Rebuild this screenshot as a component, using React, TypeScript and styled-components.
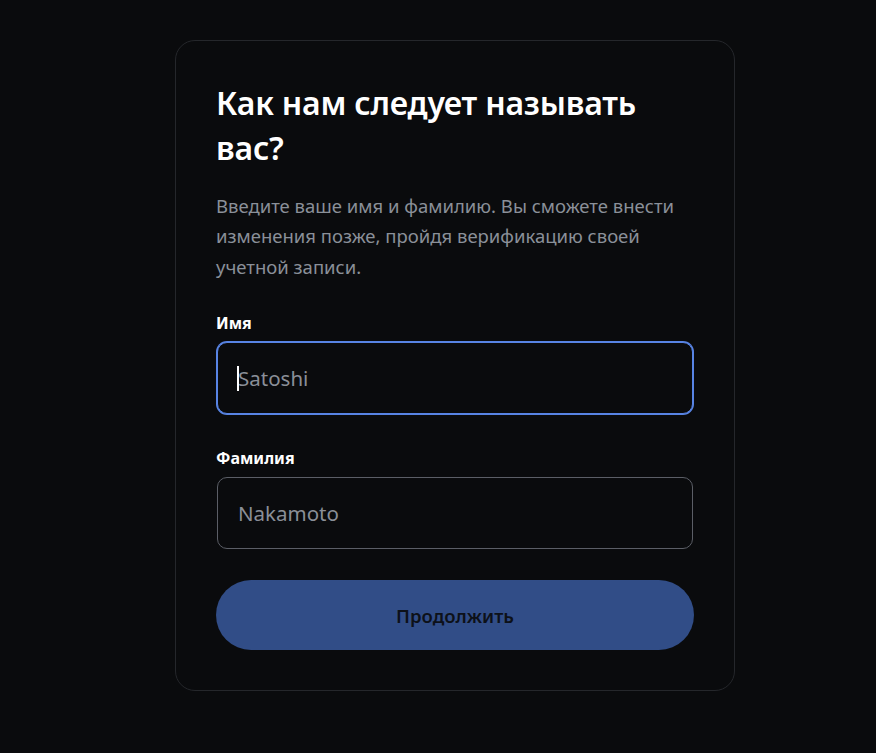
import React from "react";
import styled, { createGlobalStyle } from "styled-components";

const Global = createGlobalStyle`
  html, body { margin: 0; padding: 0; background: #0a0b0d; }
  body { font-family: "Noto Sans", "Open Sans", sans-serif; color: #fff; }
  * { box-sizing: border-box; }
`;

const Page = styled.div`
  min-height: 753px;
  padding: 40px 0 0 175px;
`;

const Card = styled.div`
  width: 560px;
  padding: 40px;
  border: 1px solid #25272b;
  border-radius: 20px;
  background: #0a0b0d;
  display: flex;
  flex-direction: column;
`;

const Title = styled.h1`
  margin: 0;
  font-size: 32px;
  line-height: 1.4;
  font-weight: 600;
  color: #ffffff;
  letter-spacing: -0.2px;
`;

const Lead = styled.p`
  margin: 20px 0 0;
  font-size: 18.5px;
  line-height: 30.6px;
  color: #8a9099;
`;

const Field = styled.div<{ $top: number }>`
  display: flex;
  flex-direction: column;
  margin-top: ${(p) => p.$top}px;
`;

const Label = styled.label`
  font-size: 16px;
  line-height: 20px;
  font-weight: 700;
  color: #ffffff;
  margin-bottom: 9px;
`;

const InputWrap = styled.div`
  position: relative;
  padding: 0 1px;
`;

const Input = styled.input<{ $focused?: boolean }>`
  display: block;
  width: 100%;
  height: 72px;
  padding: 0 20px;
  border-radius: 10px;
  border: 1px solid ${(p) => (p.$focused ? "#5884e4" : "#5b5e66")};
  box-shadow: ${(p) => (p.$focused ? "0 0 0 1px #5884e4" : "none")};
  background: #0a0b0d;
  color: #ffffff;
  font-family: "Noto Sans", sans-serif;
  font-size: 20.5px;
  outline: none;
  caret-color: transparent;
  &::placeholder { color: #8a8f98; }
`;

const Caret = styled.span`
  position: absolute;
  left: 21px;
  top: 24px;
  width: 2px;
  height: 25px;
  background: #ffffff;
`;

const Button = styled.button`
  margin-top: 31px;
  height: 70px;
  width: 100%;
  border: none;
  border-radius: 35px;
  background: #314d87;
  color: #0d1119;
  font-family: "Noto Sans", sans-serif;
  font-size: 18.5px;
  font-weight: 600;
  cursor: pointer;
`;

export default function App() {
  return (
    <>
      <Global />
      <Page>
        <Card>
          <Title>Как нам следует называть вас?</Title>
          <Lead>
            Введите ваше имя и фамилию. Вы сможете внести изменения позже, пройдя верификацию своей учетной записи.
          </Lead>
          <Field $top={31}>
            <Label>Имя</Label>
            <InputWrap>
              <Input $focused placeholder="Satoshi" />
              <Caret />
            </InputWrap>
          </Field>
          <Field $top={34}>
            <Label>Фамилия</Label>
            <InputWrap>
              <Input placeholder="Nakamoto" />
            </InputWrap>
          </Field>
          <Button>Продолжить</Button>
        </Card>
      </Page>
    </>
  );
}
